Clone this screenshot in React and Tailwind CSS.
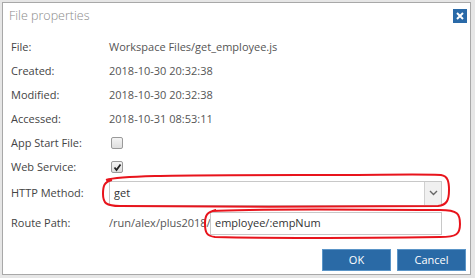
const rows = [
  ['File:', 'Workspace Files/get_employee.js'],
  ['Created:', '2018-10-30 20:32:38'],
  ['Modified:', '2018-10-30 20:32:38'],
  ['Accessed:', '2018-10-31 08:53:11'],
];

function Checkbox({ checked }) {
  return (
    <span className="ml-[2px] flex h-[12px] w-[12px] items-center justify-center rounded-[2px] border border-[#9a9a9a] bg-gradient-to-b from-[#f4f4f4] to-[#dedede]">
      {checked && (
        <svg width="9" height="9" viewBox="0 0 9 9">
          <path d="M1.5 4.5 L3.5 7 L7.5 1.5" stroke="#222" strokeWidth="1.8" fill="none" />
        </svg>
      )}
    </span>
  );
}

function Row({ label, children, className = 'h-[24px]' }) {
  return (
    <div className={`flex items-center ${className}`}>
      <div className="w-[98px] shrink-0 text-[#444]">{label}</div>
      {children}
    </div>
  );
}

export default function App() {
  return (
    <div
      className="relative h-[278px] w-[475px] overflow-hidden bg-[#e6e6e6] p-[2px] text-[11px]"
      style={{ fontFamily: '"Open Sans", "Noto Sans", sans-serif' }}
    >
      <div className="flex h-[273px] w-[469px] flex-col border border-[#a8a8a8] bg-white">
        <div className="flex h-[32px] items-center justify-between pb-[6px] pl-[6px] pr-[3px]">
          <span className="text-[12.5px] font-light text-[#8a8a8a]">File properties</span>
          <span className="flex h-[14px] w-[14px] items-center justify-center bg-[#2a6aa8]">
            <svg width="8" height="8" viewBox="0 0 8 8">
              <path d="M1 1 L7 7 M7 1 L1 7" stroke="#fff" strokeWidth="2" />
            </svg>
          </span>
        </div>
        <div className="flex flex-col pl-[8px]">
          {rows.map(([l, v]) => (
            <Row key={l} label={l}>
              <span className="text-[#555]">{v}</span>
            </Row>
          ))}
          <Row label="App Start File:">
            <Checkbox />
          </Row>
          <Row label="Web Service:">
            <Checkbox checked />
          </Row>
          <Row label="HTTP Method:" className="h-[28px]">
            <div className="flex h-[25px] w-[333px] items-center border border-[#c8c8c8] bg-white">
              <span className="flex-1 pl-[4px] text-[#333]">get</span>
              <span className="flex h-full w-[17px] items-center justify-center border-l border-[#d0d0d0] bg-[#f0f0f0]">
                <svg width="9" height="6" viewBox="0 0 9 6">
                  <path d="M1 1 L4.5 4.5 L8 1" stroke="#666" strokeWidth="1.4" fill="none" />
                </svg>
              </span>
            </div>
          </Row>
          <Row label="Route Path:" className="mt-[3px] h-[26px]">
            <div className="flex w-[333px] items-center">
              <span className="w-[101px] shrink-0 overflow-hidden whitespace-nowrap text-[#555]">/run/alex/plus2018/</span>
              <div className="flex h-[23px] w-[232px] items-center border border-[#c8c8c8] pl-[4px] text-[#333]">
                employee/:empNum
              </div>
            </div>
          </Row>
        </div>
        <div className="mt-auto mb-[3px] flex justify-end gap-[6px] pr-[4px]">
          <button className="h-[22px] w-[69px] border border-[#5a95c8] bg-[#2a6aa6] text-[11px] text-white">OK</button>
          <button className="h-[22px] w-[69px] border border-[#5a95c8] bg-[#2a6aa6] text-[11px] text-white">Cancel</button>
        </div>
      </div>
      <svg className="pointer-events-none absolute inset-0" width="475" height="278">
        <path
          d="M106 180 C118 176 160 175 300 175 C380 175 430 174 441 175 C448 176 449 182 449 190 C449 200 447 205 438 206 C380 207 200 207 120 206 C106 206 103 203 103 194 C103 186 104 182 112 180"
          stroke="#e8141c"
          strokeWidth="2"
          fill="none"
        />
        <path
          d="M212 211 C240 209 320 209 440 210 C458 210 460 214 460 224 C460 234 457 237 440 237 C360 238 260 238 215 237 C207 236 205 233 205 224 C205 215 207 212 216 210"
          stroke="#e8141c"
          strokeWidth="2"
          fill="none"
        />
      </svg>
    </div>
  );
}
